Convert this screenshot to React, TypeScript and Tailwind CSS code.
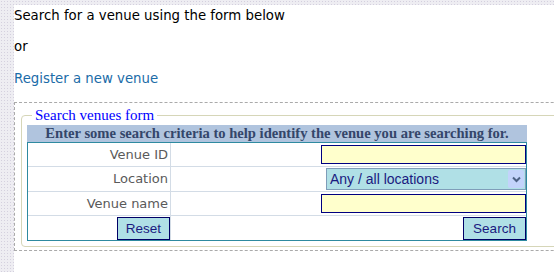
export default function App() {
  const row = "flex border-b border-[#d3dce6]";
  const label =
    "w-[143px] shrink-0 border-r border-[#d3dce6] text-right pr-[2px] text-[#5a5a5a] flex items-center justify-end";
  return (
    <div className="w-[554px] h-[272px] overflow-hidden bg-[#eeedf2] bg-[radial-gradient(#d4d0de_0.8px,transparent_0.9px)] bg-[length:3px_3px] pt-[5px] pl-[14px]">
      <div className="bg-white h-[400px] w-[640px] pt-[3px] font-['DejaVu_Sans',Verdana,sans-serif] text-[13px] leading-[16px] text-black">
        <p className="mb-[15px] text-[13.3px]">Search for a venue using the form below</p>
        <p className="mb-[16px] text-[13.3px]">or</p>
        <p className="mb-[15px] text-[13.3px]">
          <a className="text-[#1b6ca8] cursor-pointer">Register a new venue</a>
        </p>
        <div className="border border-dashed border-[#aaaaaa] pt-[4px] pl-[6px] pb-[3px]">
          <fieldset className="m-0 border border-[#d6d6b8] rounded-[4px] px-[5px] pt-[2px] pb-[5px]">
            <legend className="ml-[5px] px-[3px] font-['Liberation_Serif',serif] text-[15px] leading-[16px] text-[#0000ff]">
              Search venues form
            </legend>
            <div className="w-[500px]">
              <div className="h-[17px] bg-[#b0c4de] text-center font-['Liberation_Serif',serif] font-bold text-[14.6px] leading-[17px] text-[#34466a] whitespace-nowrap">
                Enter some search criteria to help identify the venue you are searching for.
              </div>
              <div className="border border-[#2e8aa0]">
                <div className={row + " h-[24px]"}>
                  <div className={label}>Venue ID</div>
                  <div className="flex-1 flex items-center justify-end">
                    <div className="w-[205px] h-[19px] border border-[#000080] bg-[#ffffcc]" />
                  </div>
                </div>
                <div className={row + " h-[25px]"}>
                  <div className={label}>Location</div>
                  <div className="flex-1 flex items-center justify-end">
                    <div className="w-[200px] h-[22px] border border-[#7f9db9] bg-[#b0e0e6] flex items-center">
                      <span className="flex-1 pl-[3px] font-['Liberation_Sans',Arial,sans-serif] text-[14px] text-[#1a1a80] leading-[16px]">
                        Any / all locations
                      </span>
                      <div className="w-[16px] h-[18px] mr-[1px] bg-[#c3d3fb] rounded-[2px] flex items-center justify-center">
                        <svg width="9" height="7" viewBox="0 0 9 7">
                          <path d="M1 1.5 L4.5 5 L8 1.5" stroke="#4d6185" strokeWidth="2" fill="none" />
                        </svg>
                      </div>
                    </div>
                  </div>
                </div>
                <div className={row + " h-[24px]"}>
                  <div className={label}>Venue name</div>
                  <div className="flex-1 flex items-center justify-end">
                    <div className="w-[205px] h-[19px] border border-[#000080] bg-[#ffffcc]" />
                  </div>
                </div>
                <div className="flex h-[24px]">
                  <div className="w-[143px] shrink-0 border-r border-[#d3dce6] flex items-end justify-end">
                    <button className="w-[53px] h-[23px] border border-[#000066] bg-[#b0e0e6] text-[#1a1a80] font-['Liberation_Sans',Arial,sans-serif] text-[13.5px] leading-[16px]">
                      Reset
                    </button>
                  </div>
                  <div className="flex-1 flex items-end justify-end">
                    <button className="w-[63px] h-[23px] border border-[#000066] bg-[#b0e0e6] text-[#1a1a80] font-['Liberation_Sans',Arial,sans-serif] text-[13.5px] leading-[16px]">
                      Search
                    </button>
                  </div>
                </div>
              </div>
            </div>
          </fieldset>
        </div>
      </div>
    </div>
  );
}
